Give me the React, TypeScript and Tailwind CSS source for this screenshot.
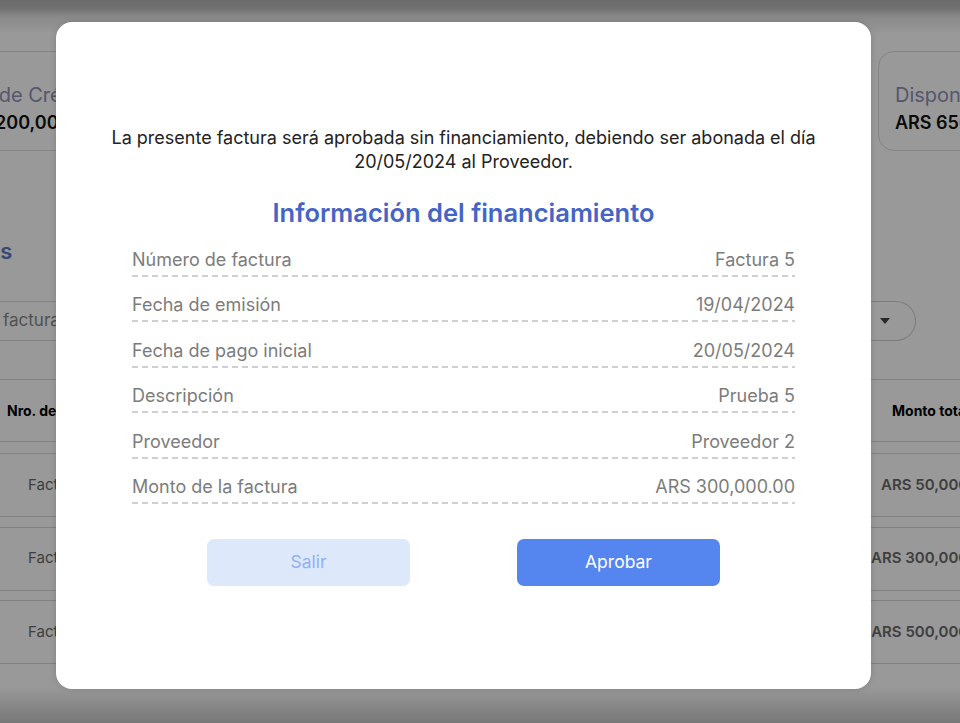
import React from "react";

const rows: [string, string][] = [
  ["Número de factura", "Factura 5"],
  ["Fecha de emisión", "19/04/2024"],
  ["Fecha de pago inicial", "20/05/2024"],
  ["Descripción", "Prueba 5"],
  ["Proveedor", "Proveedor 2"],
  ["Monto de la factura", "ARS 300,000.00"],
];

const tableRows = ["ARS 50,000.00", "ARS 300,000.00", "ARS 500,000.00"];

export default function App() {
  return (
    <div
      className="relative w-[960px] h-[723px] overflow-hidden bg-white"
      style={{ fontFamily: "Inter, 'Noto Sans', sans-serif" }}
    >
      {/* Background page */}
      <div className="flex flex-col">
        <div className="flex mt-[51px] ml-[-146px]">
          <div className="w-[1000px] h-[100px] rounded-[16px] border border-[#dcdcdc] flex flex-col pt-[29px] whitespace-nowrap">
            <div className="ml-[87px] text-[20px] leading-[28px] text-[#8f8fb5]">Línea de Crédito</div>
            <div className="ml-[99px] text-[18px] leading-[28px] font-semibold text-[#111]">ARS 200,000.00</div>
          </div>
        </div>
        <div className="flex ml-[878px] mt-[-100px]">
          <div className="w-[300px] h-[100px] rounded-[16px] border border-[#dcdcdc] flex flex-col pt-[29px] pl-[16px] whitespace-nowrap">
            <div className="text-[20px] leading-[28px] text-[#8f8fb5]">Disponible</div>
            <div className="text-[18px] leading-[28px] font-semibold text-[#111]">ARS 650,000.00</div>
          </div>
        </div>
        <div className="ml-[-80px] mt-[86px] text-[22px] leading-[28px] font-semibold text-[#5a78c8] whitespace-nowrap">Facturas</div>
        <div className="flex items-center mt-[36px] h-[40px]">
          <div className="w-[820px] h-[40px] border-y border-[#d8d8d8] flex items-center pl-[3px] text-[17px] text-[#888] whitespace-nowrap">
            factura
          </div>
          <div className="w-[96px] h-[40px] rounded-r-full border border-l-0 border-[#d0d0d0] flex items-center justify-end pr-[24px]">
            <svg width="12" height="8" viewBox="0 0 12 8"><path d="M1 1h10L6 7z" fill="#444" /></svg>
          </div>
        </div>
        <div className="mt-[38px] h-[63px] border-y border-[#d8d8d8] flex items-center pl-[7px] text-[14px] font-bold text-black whitespace-nowrap">
          <span>Nro. de factura</span>
          <span className="ml-auto w-[68px]">Monto total</span>
        </div>
        <div className="flex flex-col gap-[9.5px] mt-[11px]">
          {tableRows.map((v) => (
            <div key={v} className="h-[64px] border-y border-[#d8d8d8] flex items-center pl-[28px] text-[15px] text-[#6a6a6a] whitespace-nowrap">
              <span>Factura</span>
              <span className="ml-auto mr-[-32px] font-semibold">{v}</span>
            </div>
          ))}
        </div>
      </div>

      {/* Overlay */}
      <div className="absolute inset-0 bg-black/40" />
      <div className="absolute left-0 right-0 top-0 h-[34px] bg-[linear-gradient(to_bottom,rgba(0,0,0,0.3)_0%,rgba(0,0,0,0.26)_25%,rgba(0,0,0,0.1)_50%,rgba(0,0,0,0)_100%)]" />
      <div className="absolute left-0 right-0 bottom-0 h-[36px] bg-[linear-gradient(to_top,rgba(0,0,0,0.22),rgba(0,0,0,0))]" />

      {/* Modal */}
      <div className="absolute left-[56px] top-[22px] w-[815px] h-[667px] rounded-[16px] bg-white shadow-[0_0_6px_rgba(0,0,0,0.15)] flex flex-col items-center pt-[104px]">
        <p className="px-[40px] text-center text-[18px] leading-[24px] text-[#222]">
          La presente factura será aprobada sin financiamiento, debiendo ser abonada el día 20/05/2024 al Proveedor.
        </p>
        <h2 className="mt-[23px] text-[25.5px] leading-[32px] font-semibold text-[#4565c6]">
          Información del financiamiento
        </h2>
        <div className="mt-[19px] w-[663px] flex flex-col gap-[16.4px]">
          {rows.map(([k, v]) => (
            <div key={k} className="flex flex-col">
              <div className="flex justify-between text-[18px] leading-[24px] text-[#7c7c7c]">
                <span>{k}</span>
                <span>{v}</span>
              </div>
              <div className="mt-[3px] h-[2px] bg-[linear-gradient(to_right,#cfcfcf_60%,transparent_60%)] bg-[length:10px_2px] bg-repeat-x" />
            </div>
          ))}
        </div>
        <div className="mt-[35px] flex gap-[107px]">
          <button className="w-[203px] h-[47px] rounded-[7px] bg-[#dde8fa] text-[#93b0f2] text-[17.5px]">
            Salir
          </button>
          <button className="w-[203px] h-[47px] rounded-[7px] bg-[#5586f0] text-white text-[17.5px]">
            Aprobar
          </button>
        </div>
      </div>
    </div>
  );
}
